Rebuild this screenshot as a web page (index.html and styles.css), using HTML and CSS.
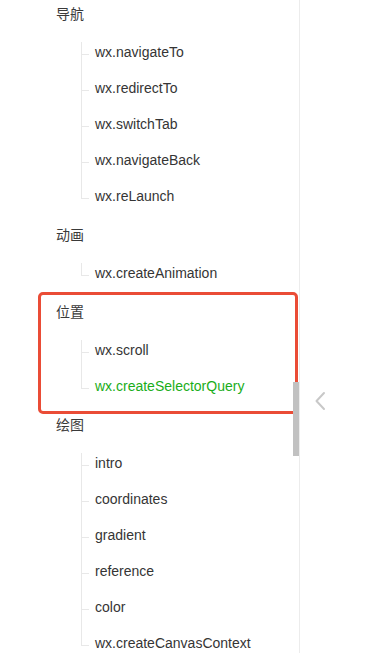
FILE: index.html
```html
<!DOCTYPE html>
<html lang="zh">
<head>
<meta charset="utf-8">
<link rel="stylesheet" href="styles.css">
</head>
<body>
<div class="page">
  <aside class="sidebar">
    <div class="tree">
      <div class="group">
        <div class="group-title">导航</div>
        <ul class="items">
          <li class="item">wx.navigateTo</li>
          <li class="item">wx.redirectTo</li>
          <li class="item">wx.switchTab</li>
          <li class="item">wx.navigateBack</li>
          <li class="item">wx.reLaunch</li>
        </ul>
      </div>
      <div class="group">
        <div class="group-title">动画</div>
        <ul class="items">
          <li class="item">wx.createAnimation</li>
        </ul>
      </div>
      <div class="group">
        <div class="group-title">位置</div>
        <ul class="items">
          <li class="item">wx.scroll</li>
          <li class="item active">wx.createSelectorQuery</li>
        </ul>
      </div>
      <div class="group">
        <div class="group-title">绘图</div>
        <ul class="items">
          <li class="item">intro</li>
          <li class="item">coordinates</li>
          <li class="item">gradient</li>
          <li class="item">reference</li>
          <li class="item">color</li>
          <li class="item">wx.createCanvasContext</li>
        </ul>
      </div>
    </div>
    <div class="highlight"></div>
    <div class="scrollbar"></div>
  </aside>
  <main class="main">
    <svg class="chevron" width="12" height="20" viewBox="0 0 12 20">
      <path d="M9 2 L1.5 10 L9 18" fill="none" stroke="#c8c8c8" stroke-width="2" stroke-linecap="round" stroke-linejoin="round"/>
    </svg>
  </main>
</div>
</body>
</html>
```
FILE: styles.css
```css
html, body {
  margin: 0;
  padding: 0;
  background: #ffffff;
}
body {
  font-family: "Liberation Sans", Arial, "Noto Sans CJK SC", sans-serif;
  font-size: 14px;
  color: #353535;
  overflow: hidden;
}
.page {
  display: flex;
  width: 369px;
  height: 653px;
  overflow: hidden;
}
.sidebar {
  position: relative;
  width: 299px;
  flex: none;
  border-right: 1px solid #ececec;
  height: 653px;
  overflow: hidden;
}
.tree {
  margin-top: -7px;
}
.group-title {
  height: 41px;
  line-height: 41px;
  padding-left: 56px;
  font-family: "Noto Sans CJK SC", sans-serif;
  font-size: 14px;
  color: #3a3a3a;
}
.items {
  list-style: none;
  margin: 0;
  padding: 0 0 0 95px;
}
.item {
  position: relative;
  height: 36px;
  line-height: 36px;
  white-space: nowrap;
}
.item::before {
  content: "";
  position: absolute;
  left: -14px;
  top: -16px;
  width: 7px;
  height: 36px;
  border-left: 1px solid #e8e8e8;
  border-bottom: 1px solid #e8e8e8;
}
.item:first-child::before {
  top: 8px;
  height: 12px;
}
.item.active {
  color: #1aad19;
}
.highlight {
  position: absolute;
  left: 38px;
  top: 292px;
  width: 255px;
  height: 117px;
  border: 3px solid #ea4c36;
  border-radius: 5px;
  box-sizing: content-box;
  width: 254px;
  height: 116px;
}
.scrollbar {
  position: absolute;
  left: 293px;
  top: 382px;
  width: 6px;
  height: 74px;
  background: #c1c1c1;
}
.main {
  flex: 1;
  position: relative;
  background: #ffffff;
}
.chevron {
  position: absolute;
  left: 15px;
  top: 391px;
}
```
